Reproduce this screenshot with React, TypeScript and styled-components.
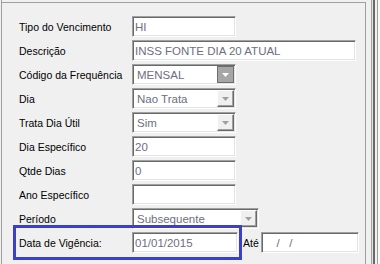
import React from "react";
import styled, { createGlobalStyle } from "styled-components";

const GlobalStyle = createGlobalStyle`
  html, body {
    margin: 0;
    padding: 0;
    background: #f0f0f0;
    font-family: "Liberation Sans", Arial, sans-serif;
  }
`;

const Screen = styled.div`
  display: flex;
  width: 380px;
  height: 264px;
  overflow: hidden;
  background: #f0f0f0;
`;

const Panel = styled.div`
  flex: 1;
  margin-left: 1px;
  border-left: 1px solid #a0a0a0;
`;

const Group = styled.div`
  margin-top: 2px;
  height: 100%;
  border-top: 1px solid #a0a0a0;
  border-right: 1px solid #a0a0a0;
  padding: 13px 0 0 17px;
`;

const Edge = styled.div`
  width: 14px;
  background: linear-gradient(
    to right,
    #f0f0f0 0 5px,
    #a0a0a0 5px 6px,
    #e3e3e3 6px 7px,
    #696969 7px 9px,
    #f0f0f0 9px 11px,
    #a0a0a0 11px 12px,
    #f7f7f7 12px 14px
  );
`;

const Row = styled.div`
  display: flex;
  align-items: center;
  height: 21px;
  margin-bottom: 3px;
`;

const Label = styled.span`
  width: 113px;
  font-size: 10.5px;
  color: #000;
  white-space: nowrap;
`;

const Field = styled.input<{ $w: number }>`
  box-sizing: border-box;
  width: ${(p) => p.$w}px;
  height: 21px;
  margin: 0;
  padding: 1px 2px;
  border: 1px solid;
  border-color: #a0a0a0 #ffffff #ffffff #a0a0a0;
  box-shadow: inset 1px 1px 0 #696969, inset -1px -1px 0 #e3e3e3;
  background: #fff;
  font-family: "Liberation Sans", Arial, sans-serif;
  font-size: 11.5px;
  color: #6e6e80;
  outline: none;
  white-space: pre;
`;

const Combo = styled.div<{ $w: number }>`
  box-sizing: border-box;
  display: flex;
  align-items: center;
  width: ${(p) => p.$w}px;
  height: 21px;
  padding: 1px;
  border: 1px solid;
  border-color: #a0a0a0 #ffffff #ffffff #a0a0a0;
  box-shadow: inset 1px 1px 0 #696969, inset -1px -1px 0 #e3e3e3;
  background: #fff;
`;

const ComboText = styled.span`
  flex: 1;
  padding-left: 3px;
  font-size: 11.5px;
  color: #6e6e80;
  white-space: nowrap;
  overflow: hidden;
`;

const DropButton = styled.div<{ $active?: boolean }>`
  box-sizing: border-box;
  display: flex;
  align-items: center;
  justify-content: center;
  width: 17px;
  height: 17px;
  border: 1px solid;
  border-color: ${(p) =>
    p.$active ? "#6e6e6e" : "#ffffff #696969 #696969 #ffffff"};
  background: ${(p) => (p.$active ? "#a6a6a6" : "#f0f0f0")};
  box-shadow: ${(p) => (p.$active ? "none" : "inset -1px -1px 0 #a0a0a0")};
`;

const Highlight = styled.div`
  display: flex;
  align-items: center;
  margin: -7px 0 -7px -6px;
  padding: 4px 1px 4px 3px;
  border: 3px solid #3b40c4;
`;

const Ate = styled.span`
  margin: 0 2px 0 1px;
  font-size: 10.5px;
  color: #000;
`;

const Arrow = ({ color }: { color: string }) => (
  <svg width="7" height="4" viewBox="0 0 7 4">
    <polygon points="0,0 7,0 3.5,4" fill={color} />
  </svg>
);

const Select = ({
  width,
  value,
  active,
}: {
  width: number;
  value: string;
  active?: boolean;
}) => (
  <Combo $w={width}>
    <ComboText>{value}</ComboText>
    <DropButton $active={active}>
      <Arrow color={active ? "#ffffff" : "#a0a0a0"} />
    </DropButton>
  </Combo>
);

export default function App() {
  return (
    <Screen>
      <GlobalStyle />
      <Panel>
        <Group>
          <Row>
            <Label>Tipo do Vencimento</Label>
            <Field $w={104} readOnly value="HI" />
          </Row>
          <Row>
            <Label>Descrição</Label>
            <Field $w={224} readOnly value="INSS FONTE DIA 20 ATUAL" />
          </Row>
          <Row>
            <Label>Código da Frequência</Label>
            <Select width={104} value="MENSAL" active />
          </Row>
          <Row>
            <Label>Dia</Label>
            <Select width={104} value="Nao Trata" />
          </Row>
          <Row>
            <Label>Trata Dia Útil</Label>
            <Select width={104} value="Sim" />
          </Row>
          <Row>
            <Label>Dia Específico</Label>
            <Field $w={104} readOnly value="20" />
          </Row>
          <Row>
            <Label>Qtde Dias</Label>
            <Field $w={104} readOnly value="0" />
          </Row>
          <Row>
            <Label>Ano Específico</Label>
            <Field $w={104} readOnly value="" />
          </Row>
          <Row>
            <Label>Período</Label>
            <Select width={127} value="Subsequente" />
          </Row>
          <Row>
            <Highlight>
              <Label>Data de Vigência:</Label>
              <Field $w={106} readOnly value="01/01/2015" />
            </Highlight>
            <Ate>Até</Ate>
            <Field $w={98} readOnly value="    /   /" />
          </Row>
        </Group>
      </Panel>
      <Edge />
    </Screen>
  );
}
